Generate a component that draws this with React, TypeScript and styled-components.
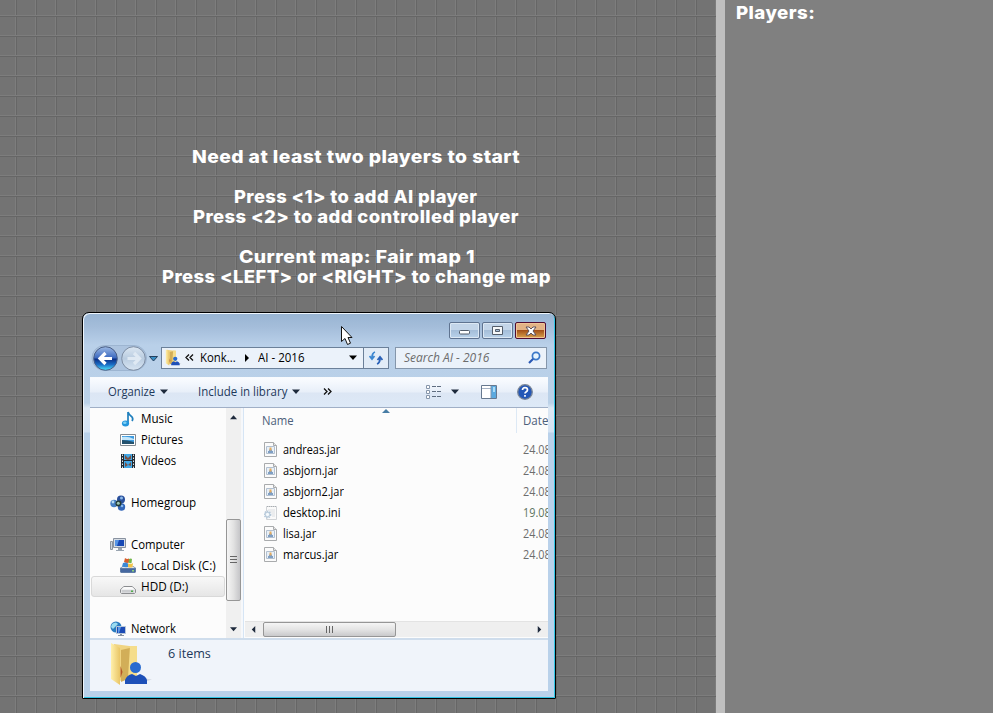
import React, { useLayoutEffect, useRef, useState } from "react";
import styled, { createGlobalStyle, css } from "styled-components";

const Global = createGlobalStyle`
  * { box-sizing: border-box; }
  body { margin: 0; overflow: hidden; font-family: "Open Sans", "Noto Sans", sans-serif; }
`;

const Screen = styled.div`
  display: grid;
  grid-template-columns: 716px 9px 1fr;
  width: 993px;
  height: 713px;
  overflow: hidden;
  background: #808080;
`;
const Board = styled.main`
  position: relative;
  display: flex;
  flex-direction: column;
  background-color: #737373;
  background-image:
    linear-gradient(#7d7d7d 0 1px, #666 1px 2px, transparent 2px),
    linear-gradient(90deg, #7d7d7d 0 1px, #666 1px 2px, transparent 2px);
  background-size: 20px 20px;
  background-position: 15px 15px;
`;
const Divider = styled.div`
  background: #bfbfbf;
`;
const Side = styled.aside`
  padding: 3px 0 0 11px;
`;
const gameType = css`
  font: 800 18px/20px Inter, sans-serif;
  letter-spacing: 0.4px;
  color: #fff;
`;
const Title = styled.div`
  ${gameType}
`;
const Messages = styled.div`
  ${gameType}
  display: flex;
  flex-direction: column;
  padding-top: 147px;
  height: 312px;
`;
const Message = styled.div<{ $x: number }>`
  height: 20px;
  padding-left: ${(p) => p.$x}px;
`;
const Gap = styled.div`
  height: 20px;
`;

const FitBox = styled.span<{ $w: number }>`
  display: inline-block;
  width: ${(p) => p.$w}px;
  white-space: nowrap;
`;
const FitText = styled.span`
  display: inline-block;
  transform-origin: 0 50%;
`;

/* Condenses or widens a label so that it fills a fixed width. */
function Fit({ w, children }: { w: number; children: React.ReactNode }) {
  const ref = useRef<HTMLSpanElement>(null);
  const [scale, setScale] = useState(1);
  useLayoutEffect(() => {
    if (ref.current) setScale(w / ref.current.offsetWidth);
  }, [w]);
  return (
    <FitBox $w={w}>
      <FitText ref={ref} style={{ transform: `scaleX(${scale})` }}>
        {children}
      </FitText>
    </FitBox>
  );
}

const Window = styled.section`
  display: flex;
  flex-direction: column;
  width: 474px;
  height: 387px;
  margin-left: 82px;
  padding: 0 7px 7px 6px;
  border: 1px solid #000;
  border-radius: 7px 7px 1px 1px;
  background: linear-gradient(#98b4d2, #a4bdda 14px, #b9d0e9 32px, #bad1e8 90px, #dce8f4 95px, #d4e3f3 119px, #b9d1ea 120px);
  box-shadow: inset 1px 1px 0 #eef5fb, inset -1px -1px 0 #2fc4e4;
  color: #000;
  font-size: 12px;
  line-height: 16px;
`;
const TitleBar = styled.header`
  display: flex;
  justify-content: flex-end;
  gap: 2px;
  height: 33px;
  padding: 9px 2px 0 0;
`;
const Caption = styled.button<{ $close?: boolean }>`
  display: grid;
  place-items: center;
  width: 31px;
  height: 17px;
  padding: 0;
  border: 1px solid ${(p) => (p.$close ? "#4f0c31" : "#5f7390")};
  border-radius: 2px;
  background: ${(p) =>
    p.$close
      ? "linear-gradient(#e2b386 0 45%, #a5521a 50%, #d9a34d)"
      : "linear-gradient(#c3d5e9 0 45%, #a5bed9 50%, #b9d2ea)"};
  box-shadow: inset 0 0 0 1px ${(p) => (p.$close ? "#efc396" : "#dce8f4")};
`;
const NavBar = styled.div`
  display: flex;
  align-items: center;
  height: 25px;
  margin-top: -1px;
  padding-left: 2px;
`;
const NavDrawing = styled.svg`
  width: 69px;
  height: 28px;
  flex: none;
`;
const Address = styled.div`
  display: flex;
  align-items: center;
  flex: none;
  width: 203px;
  height: 22px;
  margin-left: 1px;
  padding-left: 3px;
  border: 1px solid #6b8099;
  background: #ebf2fa;
`;
const Chevrons = styled.span<{ $l: number }>`
  display: flex;
  margin-left: ${(p) => p.$l}px;
`;
const Crumb = styled.span<{ $l: number }>`
  display: flex;
  margin-left: ${(p) => p.$l}px;
`;
const Refresh = styled.div`
  display: grid;
  place-items: center;
  flex: none;
  width: 25px;
  height: 22px;
  border: 1px solid #6b8099;
  border-left: 0;
  background: #e2ecf7;
`;
const Search = styled.div`
  display: flex;
  align-items: center;
  justify-content: space-between;
  flex: none;
  width: 152px;
  height: 22px;
  margin-left: 6px;
  padding: 0 5px 0 8px;
  border: 1px solid #8496ab;
  background: #ebf2fa;
  color: #6d6d6d;
  font-style: italic;
`;
const Toolbar = styled.div`
  display: flex;
  align-items: center;
  height: 31px;
  margin: 7px 0 0 1px;
  padding: 0 0 2px 18px;
  border-bottom: 1px solid #a0afc6;
  border-top: 1px solid #f8fbfe;
  background: linear-gradient(#fafcff, #e8eff9 48%, #dce6f4 52%, #dde9f7);
  color: #1e395b;
`;
const ToolItem = styled.div<{ $l?: number }>`
  display: flex;
  align-items: center;
  gap: 5px;
  margin-left: ${(p) => p.$l ?? 0}px;
`;
const Content = styled.div`
  display: flex;
  height: 230px;
  flex: none;
  margin-left: 1px;
  background: #fcfcfc;
  overflow: hidden;
`;
const Tree = styled.nav`
  width: 136px;
  flex: none;
`;
const Branch = styled.div<{ $deep?: boolean; $selected?: boolean }>`
  display: flex;
  align-items: center;
  gap: 5px;
  height: 21px;
  margin-left: 1px;
  width: 134px;
  padding-left: ${(p) => (p.$deep ? 28 : 18)}px;
  border: 1px solid ${(p) => (p.$selected ? "#d9d9d9" : "transparent")};
  border-radius: 3px;
  background: ${(p) => (p.$selected ? "linear-gradient(#f8f8f8, #e6e6e6)" : "none")};
`;
const BranchGap = styled.div`
  height: 21px;
`;
const VScroll = styled.div`
  display: flex;
  flex-direction: column;
  align-items: center;
  width: 15px;
  flex: none;
  padding-top: 6px;
  background: #f0f0f0;
`;
const VThumb = styled.div`
  display: grid;
  place-items: center;
  flex: none;
  width: 15px;
  height: 82px;
  margin: 98px 0 25px;
  border: 1px solid #969696;
  border-radius: 2px;
  background: linear-gradient(90deg, #f5f5f5, #e2e2e2 50%, #c5c5c8);
`;
const Splitter = styled.div`
  width: 3px;
  flex: none;
  border-right: 1px solid #d6e5f5;
  background: #f6f8fb;
`;
const Files = styled.div`
  display: flex;
  flex-direction: column;
  flex: 1;
  min-width: 0;
  overflow: hidden;
`;
const Columns = styled.div`
  position: relative;
  display: flex;
  flex: none;
  height: 31px;
  padding: 5px 0 0 18px;
  color: #4c607a;
`;
const SortMark = styled.svg`
  position: absolute;
  left: 138px;
  top: 0;
`;
const DateHead = styled.div`
  height: 25px;
  flex: none;
  margin: -5px 0 0 222px;
  padding: 5px 0 0 6px;
  border-left: 1px solid #dde9f5;
`;
const FileRow = styled.div`
  display: grid;
  grid-template-columns: 19px 240px 34px;
  align-items: center;
  height: 21px;
  padding-left: 20px;
`;
const FileDate = styled.span<{ $tint?: boolean }>`
  color: ${(p) => (p.$tint ? "#5d7560" : "#6d6d6d")};
`;
const HScroll = styled.div`
  display: flex;
  align-items: center;
  justify-content: space-between;
  flex: none;
  height: 16px;
  margin: auto 0 1px 1px;
  padding: 0 5px;
  border-top: 1px solid #e3e3e3;
  background: #efefef;
`;
const HThumb = styled.div`
  display: grid;
  place-items: center;
  flex: none;
  width: 133px;
  height: 15px;
  margin: 0 auto 0 6px;
  border: 1px solid #969696;
  border-radius: 2px;
  background: linear-gradient(#f5f5f5, #e4e4e4 50%, #c9c9cb);
`;
const Details = styled.footer`
  display: flex;
  flex: 1;
  margin-left: 1px;
  padding: 2px 0 0 20px;
  border-top: 2px solid #cfddec;
  background: #f0f4fa;
  color: #1e395b;
`;
const Count = styled.div`
  margin: 4px 0 0 16px;
`;
const Pointer = styled.svg`
  position: absolute;
  left: 340px;
  top: 325px;
`;

function Tri({ dir = "down", color = "#1e2a3c", size = 7 }: { dir?: string; color?: string; size?: number }) {
  const d: Record<string, string> = {
    down: "M0 1.5h8L4 6z",
    up: "M0 6h8L4 1.5z",
    right: "M2 0v8l4-4z",
    left: "M6 0v8L2 4z",
  };
  return (
    <svg width={size} height={size} viewBox="0 0 8 8">
      <path d={d[dir]} fill={color} />
    </svg>
  );
}

function Folder({ w, h }: { w: number; h: number }) {
  return (
    <svg width={w} height={h} viewBox="0 0 42 44">
      <defs>
        <linearGradient id="fold" x2="1">
          <stop offset="0" stopColor="#fff0ac" />
          <stop offset="1" stopColor="#e9c566" />
        </linearGradient>
      </defs>
      <path d="M34 40l8-2.500-7-1z" fill="#d5dae1" />
      <path d="M4 2l23 3v30l-16 4-7-5z" fill="#f0d482" />
      <path d="M11 8l13-3v29l-13 6z" fill="#d2ae58" />
      <path d="M10.500 24l2 6-2 6z" fill="#b35328" />
      <path d="M20 4h7v30l-9 2z" fill="#f5dd8b" />
      <path d="M1 1l9 5v37L1 37z" fill="url(#fold)" />
      <circle cx="25.500" cy="25.500" r="5.500" fill="#286bd0" />
      <path d="M15 42v-4q2-5 7-6l4 2 4-2q6 2 7 6v4z" fill="#1e50b8" />
    </svg>
  );
}

function Icon({ kind }: { kind: string }) {
  return (
    <svg width="16" height="16" viewBox="0 0 16 16">
      {kind === "music" && (
        <>
          <path d="M8 1v11M8 1q1 3 4 5 1.500 2 0 4" stroke="#1f7fbd" strokeWidth="1.700" fill="none" />
          <ellipse cx="5.500" cy="12.500" rx="3.600" ry="2.900" fill="#2496dc" />
          <ellipse cx="4.800" cy="11.800" rx="1.800" ry="1.200" fill="#7fd0f5" />
        </>
      )}
      {kind === "pictures" && (
        <>
          <path d="M.5 2.500h15v11H.5z" fill="#fff" stroke="#858b91" />
          <path d="M2 4h12v8H2z" fill="#3d9be0" />
          <path d="M2 5q6-1 12 2v1H2z" fill="#c3e6fa" />
          <path d="M2 8q5 0 12 2v2H2z" fill="#23516d" />
        </>
      )}
      {kind === "videos" && (
        <>
          <path d="M1 1h14v14H1z" fill="#232a31" />
          <path d="M4 1h8v6H4zM4 8h8v7H4z" fill="#42a8e7" />
          <path d="M5 2l3 3 3-3v4l-3 1-3-1zM5 9l3 3 3-3v4l-3-1-3 2z" fill="#795346" />
          <path d="M2.500 1.500v14M13.500 1.500v14" stroke="#e3e8ec" strokeDasharray="1.500 1.500" />
        </>
      )}
      {kind === "home" && (
        <>
          <circle cx="4" cy="8.500" r="3.700" fill="#467fc4" />
          <circle cx="11" cy="4.500" r="4" fill="#294f9b" />
          <circle cx="11.500" cy="12" r="3.700" fill="#3266b9" />
          <circle cx="8.500" cy="8.500" r="3" fill="#233b35" />
          <circle cx="8.300" cy="8.300" r="1.500" fill="#9dc6b8" />
          <circle cx="3" cy="7" r="1.400" fill="#b7dcf4" />
          <circle cx="11.500" cy="3" r="1.500" fill="#8cb9e8" />
          <circle cx="12" cy="11" r="1.300" fill="#86b9ee" />
        </>
      )}
      {kind === "computer" && (
        <>
          <path d="M.5 4.500h2v8h-2z" fill="#cfd5dc" stroke="#8c949f" />
          <path d="M3.500 1.500h12v9h-12z" fill="#d6dde5" stroke="#8992a0" />
          <path d="M5 3h9v6H5z" fill="#1748b4" />
          <path d="M5 3h4L7 9H5z" fill="#5694e5" />
          <path d="M8 11h4v2h2v1H6v-1h2z" fill="#9aa5b1" />
        </>
      )}
      {kind === "disk" && (
        <>
          <path d="M0 10l3-2h10l3 2v4l-1 1H1l-1-1z" fill="#607da7" />
          <path d="M1 10l3-2h8l3 2z" fill="#dfe5ec" />
          <path d="M1 11h14v3H1z" fill="#4668a0" />
          <path d="M12 12h2v1.500h-2z" fill="#8fd07a" />
          <path d="M5 0q2 1.500 4 .5v4Q7 5.500 4 4z" fill="#d85e2d" />
          <path d="M9 1q2-1 3 0l-.5 4Q10 5.500 8.500 4.500z" fill="#75b84b" />
          <path d="M3 5q3-1 5 .5V9Q5 9.500 2 8.500z" fill="#3b89d7" />
          <path d="M8 5.500q3 1 5-.5l-.5 4Q10 10 8 9z" fill="#f3c44a" />
        </>
      )}
      {kind === "hdd" && (
        <>
          <path d="M.5 10.500L4 7.500h8l3.500 3v3l-1 1h-13l-1-1z" fill="#e3e4e6" stroke="#8b8d90" />
          <path d="M1 10.500L4 8h8l3 2.500z" fill="#fafafa" />
          <path d="M2 11h12v2.500H2z" fill="#cbcdd0" />
          <path d="M11 11.500h2V13h-2z" fill="#4fae48" />
        </>
      )}
      {kind === "network" && (
        <>
          <circle cx="6" cy="6" r="5.500" fill="#2b7cc0" />
          <path d="M2 3q4-3 6 0L5 6 3 8 1 6zM6 8l3 1-2 2z" fill="#9bdcf0" />
          <path d="M6.500 5.500h9v7h-9z" fill="#1c4bb5" stroke="#b7c6d7" />
          <path d="M8 6h3l-2 6H8z" fill="#5c9ae6" />
          <path d="M10 13h2v1h2v1H8v-1h2z" fill="#8593a4" />
        </>
      )}
      {kind === "jar" && (
        <>
          <path d="M.5.5h9l3 3v11H.5z" fill="#fbfbfb" stroke="#a9abad" />
          <path d="M9.500.5v3h3" fill="#e6e6e6" stroke="#a9abad" />
          <path d="M2.500 4.500h8v7h-8z" fill="#e8f0f8" stroke="#b2c0d0" />
          <path d="M4 9h5v2H4zM5 7.500h3V9H5z" fill="#7f9fc4" />
          <path d="M5.500 5.500h2v3h-2z" fill="#e5ab5d" />
        </>
      )}
      {kind === "ini" && (
        <>
          <path d="M2.500 1.500h10v13h-10z" fill="#fafafa" stroke="#d0d3d6" />
          <path d="M3 1.500h9" stroke="#a9adb1" strokeDasharray="1 1" />
          <path d="M4 5h7M6 7h5M8 9h3M8 11h3" stroke="#dcdfe2" />
          <circle cx="3.500" cy="9.500" r="3" fill="#f5fafd" stroke="#b5c8d9" strokeWidth="1.800" strokeDasharray="1.400 .8" />
          <circle cx="3.500" cy="9.500" r="2.200" fill="none" stroke="#b9cbdb" />
        </>
      )}
    </svg>
  );
}

const files: [string, number, string][] = [
  ["andreas.jar", 57, "24.08"],
  ["asbjorn.jar", 55, "24.08"],
  ["asbjorn2.jar", 61, "24.08"],
  ["desktop.ini", 58, "19.08"],
  ["lisa.jar", 33, "24.08"],
  ["marcus.jar", 55, "24.08"],
];

function DoubleChevron({ flip }: { flip?: boolean }) {
  return (
    <svg width="9" height="7" viewBox="0 0 9 7">
      <path
        d={flip ? "M4 .5L1 3.500l3 3M8 .5L5 3.500l3 3" : "M1 .5l3 3-3 3M5 .5l3 3-3 3"}
        fill="none"
        stroke="#111"
        strokeWidth="1.300"
      />
    </svg>
  );
}

function NavButtons() {
  return (
    <NavDrawing viewBox="0 0 69 28">
      <defs>
        <linearGradient id="back" y2="1" x2="0">
          <stop offset="0" stopColor="#9db9e3" />
          <stop offset=".48" stopColor="#3a68c0" />
          <stop offset=".52" stopColor="#0b2d83" />
          <stop offset=".75" stopColor="#1a6bc4" />
          <stop offset="1" stopColor="#4fe6fb" />
        </linearGradient>
        <linearGradient id="fwd" y2="1" x2="0">
          <stop offset="0" stopColor="#dce7f2" />
          <stop offset=".5" stopColor="#b9cce0" />
          <stop offset="1" stopColor="#d8e5f2" />
        </linearGradient>
      </defs>
      <rect x="1" y="1.500" width="54.500" height="25" rx="12.500" fill="#adc4df" stroke="#9db5d1" />
      <circle cx="14.500" cy="14.500" r="11.800" fill="url(#back)" stroke="#4a5f86" />
      <path d="M14.500 9l-5.500 5.500 5.500 5.500M10 14.500h11" fill="none" stroke="#fff" strokeWidth="3.200" />
      <circle cx="42.500" cy="14.500" r="11.800" fill="url(#fwd)" stroke="#7d8da3" />
      <path d="M43 9l5.500 5.500L43 20M48 14.500H36.500" fill="none" stroke="#dfe9f3" strokeWidth="3.200" />
      <path d="M58.500 12.500h8l-4 4.500z" fill="#398ec5" stroke="#24405f" />
    </NavDrawing>
  );
}

export default function App() {
  return (
    <>
      <Global />
      <Screen>
        <Board>
          <Messages>
            <Message $x={192}><Fit w={328}>Need at least two players to start</Fit></Message>
            <Gap />
            <Message $x={234}><Fit w={243}>Press &lt;1&gt; to add AI player</Fit></Message>
            <Message $x={193}><Fit w={326}>Press &lt;2&gt; to add controlled player</Fit></Message>
            <Gap />
            <Message $x={239}><Fit w={236}>Current map: Fair map 1</Fit></Message>
            <Message $x={162}><Fit w={389}>Press &lt;LEFT&gt; or &lt;RIGHT&gt; to change map</Fit></Message>
          </Messages>

          <Window>
            <TitleBar>
              <Caption aria-label="Minimize">
                <svg width="13" height="9"><rect x="1.500" y="4.500" width="10" height="3.500" rx="1" fill="#fff" stroke="#535d6b" /></svg>
              </Caption>
              <Caption aria-label="Maximize">
                <svg width="12" height="9"><path d="M.5 .5h10v8h-10zM3.500 3.500v2h4v-2z" fill="#f6f8fa" fillRule="evenodd" stroke="#535d6b" /></svg>
              </Caption>
              <Caption $close aria-label="Close">
                <svg width="12" height="10" viewBox="0 0 12 10">
                  <path d="M1 1h3l2 2 2-2h3L8 5l3 4H8L6 7 4 9H1l3-4z" fill="#fff" stroke="#5c505c" />
                </svg>
              </Caption>
            </TitleBar>
            <NavBar>
              <NavButtons />
              <Address>
                <Folder w={17} h={17} />
                <Chevrons $l={3}><DoubleChevron flip /></Chevrons>
                <Crumb $l={6}><Fit w={36}>Konk...</Fit></Crumb>
                <Crumb $l={7}><Tri dir="right" color="#000" size={8} /></Crumb>
                <Crumb $l={7}><Fit w={46}>AI - 2016</Fit></Crumb>
                <Crumb $l={45}><Tri color="#000" size={8} /></Crumb>
              </Address>
              <Refresh>
                <svg width="14" height="14" viewBox="0 0 14 14" fill="none" stroke="#2b62b8" strokeWidth="1.800">
                  <path d="M6 1Q3 2 3 7M.5 5L3 8l2.500-3" stroke="#3b86d0" />
                  <path d="M8 13q3-1 3-6M8.500 9L11 6l2.500 3" />
                </svg>
              </Refresh>
              <Search>
                <Fit w={85}>Search AI - 2016</Fit>
                <svg width="13" height="13" viewBox="0 0 13 13" fill="none">
                  <path d="M1 12l5-5" stroke="#2a58b4" strokeWidth="2.200" />
                  <circle cx="8" cy="5" r="3.600" fill="#e6f4fd" stroke="#3a78c8" strokeWidth="1.700" />
                </svg>
              </Search>
            </NavBar>
            <Toolbar>
              <ToolItem><Fit w={47}>Organize</Fit><Tri size={8} /></ToolItem>
              <ToolItem $l={30}><Fit w={89}>Include in library</Fit><Tri size={8} /></ToolItem>
              <ToolItem $l={23}><DoubleChevron /></ToolItem>
              <ToolItem $l={94}>
                <svg width="16" height="14" viewBox="0 0 16 14">
                  {[0, 5, 10].map((y) => (
                    <g key={y}>
                      <path d={`M.5 ${y + 0.5}h3v3h-3z`} fill="#fff" stroke="#8796ab" />
                      <path d={`M6 ${y + 1.5}h4M11 ${y + 1.5}h4`} stroke="#5f6d80" />
                    </g>
                  ))}
                </svg>
              </ToolItem>
              <ToolItem $l={9}><Tri size={8} /></ToolItem>
              <ToolItem $l={22}>
                <svg width="16" height="14" viewBox="0 0 16 14">
                  <path d="M.5.5h15v13H.5z" fill="#fff" stroke="#66788f" />
                  <path d="M1 3.500h9" stroke="#a5b2c4" />
                  <path d="M10 1h5v12h-5z" fill="#5ba9df" />
                  <path d="M10 1v12" stroke="#7f96b2" />
                  <path d="M12 2h2v5h-2z" fill="#abdcf8" />
                </svg>
              </ToolItem>
              <ToolItem $l={20}>
                <svg width="16" height="16" viewBox="0 0 16 16">
                  <circle cx="8" cy="8" r="7.300" fill="#2457b6" stroke="#7b8797" strokeWidth="1.300" />
                  <path d="M5.500 6Q5.500 3.700 8 3.700T10.500 6Q10.500 7 9 8q-1 .6-1 1.600M8 11v1.700" fill="none" stroke="#fff" strokeWidth="1.700" />
                </svg>
              </ToolItem>
            </Toolbar>
            <Content>
              <Tree>
                <Branch $deep><Icon kind="music" /><Fit w={32}>Music</Fit></Branch>
                <Branch $deep><Icon kind="pictures" /><Fit w={42}>Pictures</Fit></Branch>
                <Branch $deep><Icon kind="videos" /><Fit w={35}>Videos</Fit></Branch>
                <BranchGap />
                <Branch><Icon kind="home" /><Fit w={65}>Homegroup</Fit></Branch>
                <BranchGap />
                <Branch><Icon kind="computer" /><Fit w={54}>Computer</Fit></Branch>
                <Branch $deep><Icon kind="disk" /><Fit w={75}>Local Disk (C:)</Fit></Branch>
                <Branch $deep $selected><Icon kind="hdd" /><Fit w={47}>HDD (D:)</Fit></Branch>
                <BranchGap />
                <Branch><Icon kind="network" /><Fit w={45}>Network</Fit></Branch>
              </Tree>
              <VScroll>
                <Tri dir="up" />
                <VThumb>
                  <svg width="7" height="8"><path d="M0 .5h7M0 3.500h7M0 6.500h7" stroke="#666" /></svg>
                </VThumb>
                <Tri />
              </VScroll>
              <Splitter />
              <Files>
                <Columns>
                  <Fit w={32}>Name</Fit>
                  <SortMark width="8" height="5"><path d="M0 5l4-4 4 4z" fill="#477da5" /></SortMark>
                  <DateHead><Fit w={25}>Date</Fit></DateHead>
                </Columns>
                {files.map(([name, w, date]) => (
                  <FileRow key={name}>
                    <Icon kind={name.endsWith("ini") ? "ini" : "jar"} />
                    <Fit w={w}>{name}</Fit>
                    <FileDate $tint={date === "19.08"}><Fit w={28}>{date}</Fit></FileDate>
                  </FileRow>
                ))}
                <HScroll>
                  <Tri dir="left" />
                  <HThumb>
                    <svg width="8" height="7"><path d="M.5 0v7M3.500 0v7M6.500 0v7" stroke="#666" /></svg>
                  </HThumb>
                  <Tri dir="right" />
                </HScroll>
              </Files>
            </Content>
            <Details>
              <Folder w={42} h={44} />
              <Count><Fit w={43}>6 items</Fit></Count>
            </Details>
          </Window>
          <Pointer width="13" height="21" viewBox="0 0 13 21">
            <path d="M1.500 1.500v15l3.500-3 2.500 6 3-1.300-2.500-5.700h4z" fill="#fff" stroke="#111" />
          </Pointer>
        </Board>
        <Divider />
        <Side>
          <Title><Fit w={79}>Players:</Fit></Title>
        </Side>
      </Screen>
    </>
  );
}
